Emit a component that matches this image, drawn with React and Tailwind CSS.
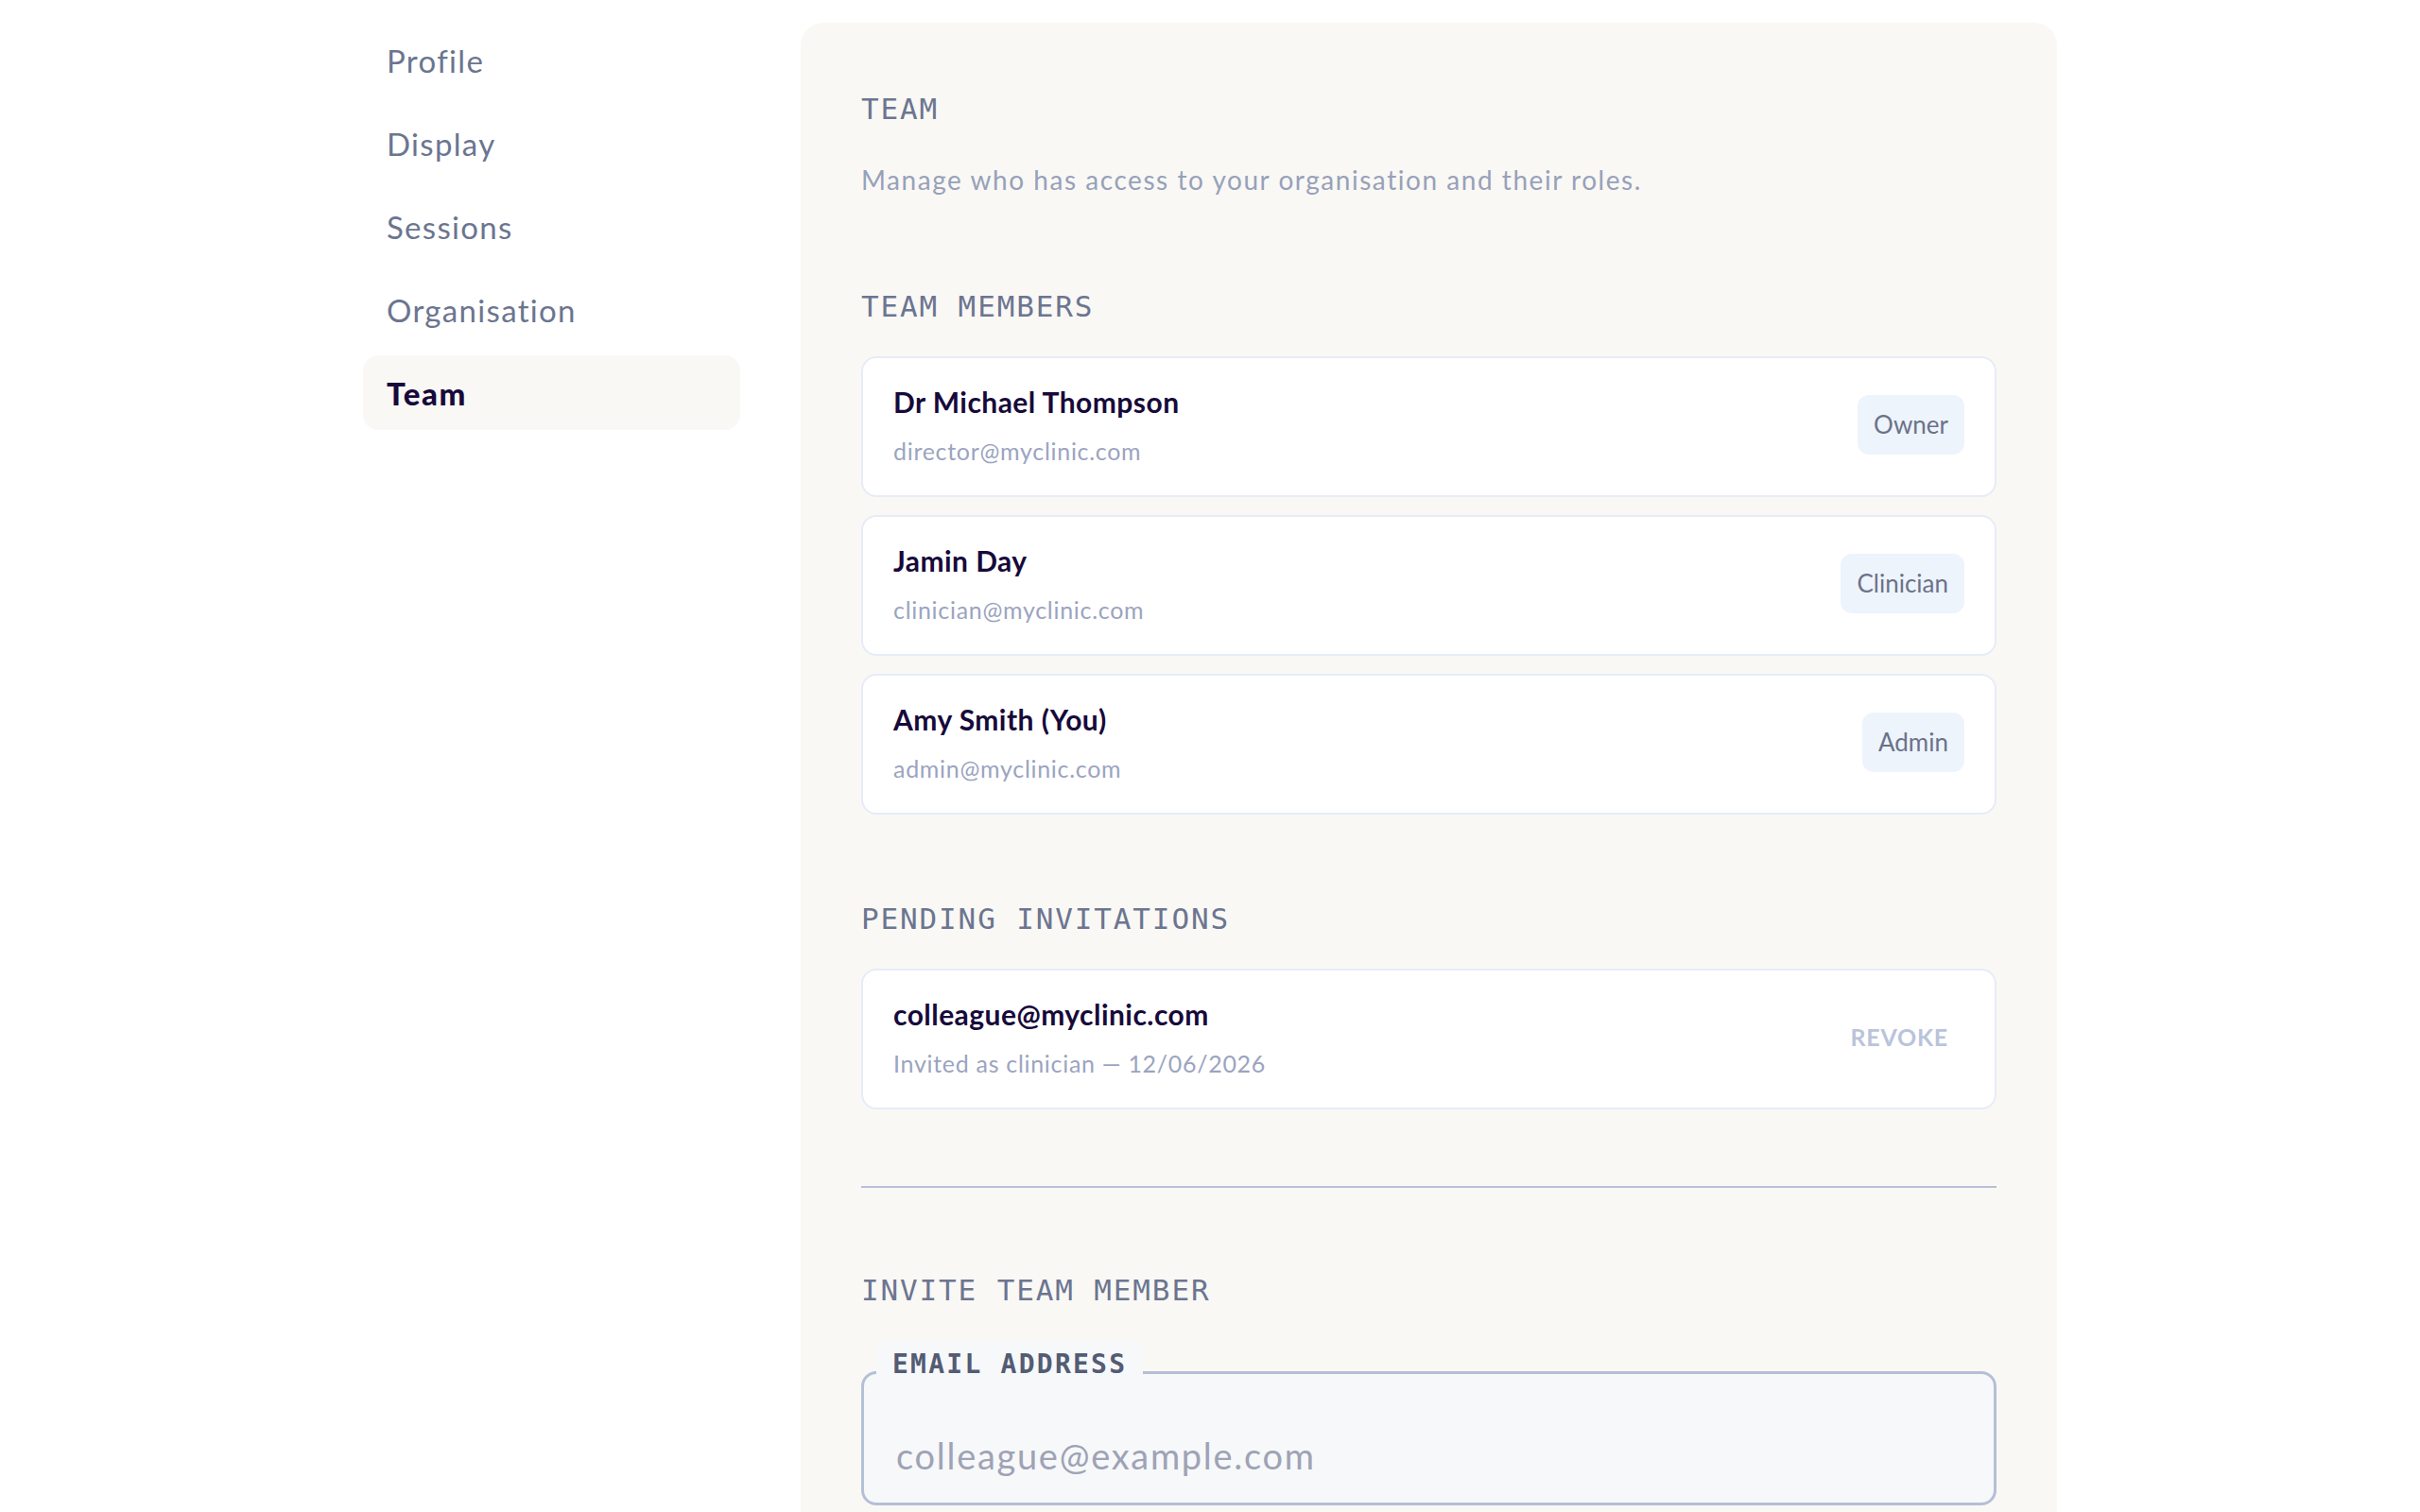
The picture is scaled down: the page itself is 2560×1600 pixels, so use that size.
import React from 'react';

const sans = { fontFamily: 'Lato, "Open Sans", sans-serif' };

const navItems = ['Profile', 'Display', 'Sessions', 'Organisation', 'Team'];

const members = [
  { name: 'Dr Michael Thompson', email: 'director@myclinic.com', role: 'Owner' },
  { name: 'Jamin Day', email: 'clinician@myclinic.com', role: 'Clinician' },
  { name: 'Amy Smith (You)', email: 'admin@myclinic.com', role: 'Admin' },
];

const SectionTitle = ({ children, className = '' }) => (
  <h2
    className={`font-['DejaVu_Sans_Mono',monospace] text-[31px] leading-[40px] tracking-[0.06em] text-[#6c7590] font-normal ${className}`}
  >
    {children}
  </h2>
);

const Row = ({ title, subtitle, right }) => (
  <div className="flex items-center justify-between bg-white border-2 border-[#e6ecf7] rounded-2xl px-[32px] pt-[26px] pb-[30px]">
    <div className="flex flex-col">
      <span className="text-[30px] leading-[40px] font-bold tracking-[0.015em] text-[#170a3a]">{title}</span>
      <span className="mt-[15px] text-[25px] leading-[34px] tracking-[0.028em] text-[#9ba4bf]">{subtitle}</span>
    </div>
    {right}
  </div>
);

export default function App() {
  return (
    <div className="min-h-screen bg-white" style={sans}>
      <div className="max-w-[1792px] mx-auto flex gap-[64px] pt-[24px]">
        {/* Sidebar */}
        <nav className="w-[399px] shrink-0 flex flex-col gap-[9px]">
          {navItems.map((item) => {
            const active = item === 'Team';
            return (
              <div
                key={item}
                className={`h-[79px] flex items-center px-[25px] rounded-2xl text-[33px] leading-[40px] ${
                  active
                    ? 'bg-[#f9f8f5] font-black tracking-[0.05em] text-[#170a3a]'
                    : 'tracking-[0.04em] text-[#6b7590]'
                }`}
              >
                {item}
              </div>
            );
          })}
        </nav>

        {/* Main panel */}
        <main className="flex-1 bg-[#f9f8f5] rounded-[24px] px-[64px] pt-[71px] pb-[80px]">
          <SectionTitle>TEAM</SectionTitle>
          <p className="mt-[37px] text-[28px] leading-[36px] tracking-[0.055em] text-[#97a1b9]">
            Manage who has access to your organisation and their roles.
          </p>

          <SectionTitle className="mt-[96px]">TEAM MEMBERS</SectionTitle>
          <div className="mt-[33px] flex flex-col gap-[19px]">
            {members.map((m) => (
              <Row
                key={m.email}
                title={m.name}
                subtitle={m.email}
                right={
                  <span className="h-[63px] flex items-center px-[17px] rounded-xl bg-[#eef4fc] text-[26px] text-[#6b7288]">
                    {m.role}
                  </span>
                }
              />
            ))}
          </div>

          <SectionTitle className="mt-[90px]">PENDING INVITATIONS</SectionTitle>
          <div className="mt-[33px]">
            <Row
              title="colleague@myclinic.com"
              subtitle="Invited as clinician — 12/06/2026"
              right={
                <button className="px-[17px] py-2 text-[25px] font-bold tracking-[0.03em] text-[#bac3db]">
                  REVOKE
                </button>
              }
            />
          </div>

          <div className="mt-[81px] h-[2px] bg-[#b8c0d6]" />

          <SectionTitle className="mt-[88px]">INVITE TEAM MEMBER</SectionTitle>

          <div className="relative mt-[66px]">
            <label className="absolute left-[16px] -top-[32px] pt-[3px] px-[17px] rounded-t-lg bg-[#f7f8fa] font-['DejaVu_Sans_Mono',monospace] text-[28px] leading-[44px] tracking-[0.08em] font-semibold text-[#535c73]">
              EMAIL ADDRESS
            </label>
            <div className="h-[142px] rounded-2xl border-[3px] border-[#b5bfd6] bg-[#f7f8fa]">
              <input
                type="email"
                placeholder="colleague@example.com"
                className="w-full bg-transparent outline-none pl-[34px] pt-[64px] text-[38px] leading-[44px] tracking-[0.045em] text-[#170a3a] placeholder:text-[#9ea3b5]"
                style={sans}
              />
            </div>
          </div>
        </main>
      </div>
    </div>
  );
}
